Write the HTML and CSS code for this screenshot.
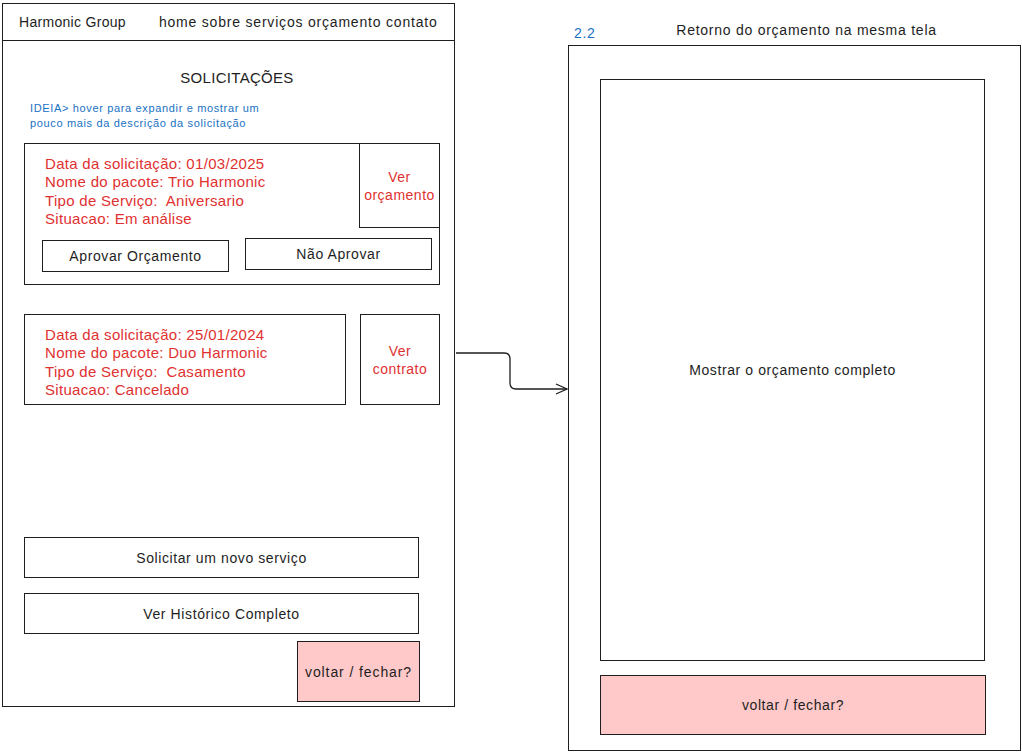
FILE: index.html
```html
<!DOCTYPE html>
<html lang="pt-BR">
<head>
  <meta charset="UTF-8" />
  <title>Harmonic Group – Solicitações</title>
  <link rel="stylesheet" href="styles.css">
</head>
<body>

<!-- tela 2: lista de solicitações -->
<div class="screen">
  <div class="header">
    <span class="brand">Harmonic Group</span>
    <nav class="nav">home sobre serviços orçamento contato</nav>
  </div>

  <div class="content">
    <h1 class="title">SOLICITAÇÕES</h1>
    <p class="note">IDEIA&gt; hover para expandir e mostrar um<br>pouco mais da descrição da solicitação</p>

    <div class="card">
      <div class="card-top">
        <div class="info">
          Data da solicitação: 01/03/2025<br>
          Nome do pacote: Trio Harmonic<br>
          Tipo de Serviço:&nbsp; Aniversario<br>
          Situacao: Em análise
        </div>
        <div class="ver ver-inset">Ver<br>orçamento</div>
      </div>
      <div class="actions">
        <div class="btn btn-approve">Aprovar Orçamento</div>
        <div class="btn btn-deny">Não Aprovar</div>
      </div>
    </div>

    <div class="row">
      <div class="card card-small">
        <div class="info">
          Data da solicitação: 25/01/2024<br>
          Nome do pacote: Duo Harmonic<br>
          Tipo de Serviço:&nbsp; Casamento<br>
          Situacao: Cancelado
        </div>
      </div>
      <div class="ver ver-box">Ver<br>contrato</div>
    </div>

    <div class="wide-btn first">Solicitar um novo serviço</div>
    <div class="wide-btn">Ver Histórico Completo</div>
    <div class="close-btn">voltar / fechar?</div>
  </div>
</div>

<!-- seta entre as telas -->
<svg class="arrow" width="116" height="52" viewBox="0 0 116 52">
  <path d="M1 8 H49 Q55 8 55 14 V38 Q55 44 61 44 H112" fill="none" stroke="#1e1e1e" stroke-width="1.3"/>
  <path d="M101 39 L112 44 L101 49" fill="none" stroke="#1e1e1e" stroke-width="1.3"/>
</svg>

<!-- tela 2.2: retorno do orçamento -->
<div class="side">
  <div class="side-labels">
    <span class="num">2.2</span>
    <span class="side-title">Retorno do orçamento na mesma tela</span>
  </div>
  <div class="screen screen-right">
    <div class="preview">Mostrar o orçamento completo</div>
    <div class="close-wide">voltar / fechar?</div>
  </div>
</div>

</body>
</html>
```

FILE: styles.css
```css
html, body {
  margin: 0;
  padding: 0;
  background: #fff;
  color: #1e1e1e;
  font-family: 'Liberation Sans', Arial, sans-serif;
}

body {
  display: flex;
  align-items: flex-start;
  position: relative;
  width: 1022px;
  height: 752px;
  overflow: hidden;
}

.screen {
  border: 1px solid #1e1e1e;
  box-sizing: border-box;
}

/* tela esquerda */
.screen:first-child {
  width: 453px;
  height: 704px;
  margin: 3px 0 0 2px;
}

.header {
  height: 37px;
  box-sizing: border-box;
  border-bottom: 1px solid #1e1e1e;
  display: flex;
  align-items: center;
  padding-left: 16px;
  font-size: 14px;
}

.brand {
  letter-spacing: 0.3px;
}

.nav {
  margin-left: 33px;
  letter-spacing: 0.8px;
}

.content {
  padding: 0 0 0 21px;
}

.title {
  font-size: 15px;
  font-weight: 400;
  line-height: 20px;
  margin: 27px 0 0;
  text-align: center;
  padding-right: 4px;
  letter-spacing: 0.3px;
}

.note {
  margin: 13px 0 0 6px;
  font-size: 11px;
  line-height: 15px;
  color: #1971c2;
  letter-spacing: 0.65px;
}

.card {
  border: 1px solid #1e1e1e;
  box-sizing: border-box;
}

.content > .card {
  width: 416px;
  margin-top: 12px;
  height: 142px;
}

.card-top {
  display: flex;
  justify-content: space-between;
  height: 84px;
}

.info {
  padding: 11px 0 0 20px;
  color: #e03131;
  font-size: 15px;
  line-height: 18.3px;
  letter-spacing: 0.3px;
}

.ver {
  color: #e03131;
  font-size: 14px;
  line-height: 18px;
  letter-spacing: 0.5px;
  text-align: center;
  display: flex;
  align-items: center;
  justify-content: center;
  box-sizing: border-box;
}

.ver-inset {
  width: 80px;
  border-left: 1px solid #1e1e1e;
  border-bottom: 1px solid #1e1e1e;
}

.actions {
  display: flex;
  gap: 16px;
  padding-left: 17px;
  margin-top: 12px;
}

.btn {
  width: 187px;
  height: 32px;
  border: 1px solid #1e1e1e;
  box-sizing: border-box;
  display: flex;
  align-items: center;
  justify-content: center;
  font-size: 14px;
  letter-spacing: 0.6px;
}

.btn-deny {
  margin-top: -2px;
}

.row {
  display: flex;
  gap: 14px;
  margin-top: 29px;
}

.card-small {
  width: 322px;
  height: 91px;
}

.ver-box {
  width: 80px;
  height: 91px;
  border: 1px solid #1e1e1e;
}

.wide-btn {
  width: 395px;
  height: 41px;
  border: 1px solid #1e1e1e;
  box-sizing: border-box;
  display: flex;
  align-items: center;
  justify-content: center;
  font-size: 14px;
  letter-spacing: 0.6px;
  margin-top: 15px;
}

.wide-btn.first {
  margin-top: 132px;
}

.close-btn {
  width: 123px;
  height: 61px;
  margin: 7px 0 0 273px;
  border: 1px solid #1e1e1e;
  box-sizing: border-box;
  background: #ffc9c9;
  display: flex;
  align-items: center;
  justify-content: center;
  font-size: 14px;
  letter-spacing: 0.9px;
  white-space: nowrap;
}

/* seta */
.arrow {
  position: absolute;
  left: 455px;
  top: 345px;
}

/* tela direita */
.side {
  margin-left: 113px;
  margin-top: 21px;
}

.side-labels {
  display: flex;
  align-items: flex-start;
  height: 24px;
  font-size: 14px;
  line-height: 16px;
  letter-spacing: 0.6px;
}

.num {
  color: #1971c2;
  margin: 4px 0 0 6px;
}

.side-title {
  margin: 1px 0 0 81px;
  letter-spacing: 0.75px;
}

.screen-right {
  width: 453px;
  height: 706px;
  padding: 33px 0 0 31px;
}

.preview {
  width: 385px;
  height: 582px;
  border: 1px solid #1e1e1e;
  box-sizing: border-box;
  display: flex;
  align-items: center;
  justify-content: center;
  font-size: 14px;
  letter-spacing: 0.6px;
  padding-bottom: 1px;
}

.close-wide {
  width: 386px;
  height: 60px;
  margin-top: 14px;
  border: 1px solid #1e1e1e;
  box-sizing: border-box;
  background: #ffc9c9;
  display: flex;
  align-items: center;
  justify-content: center;
  font-size: 14px;
  letter-spacing: 0.6px;
}
```
